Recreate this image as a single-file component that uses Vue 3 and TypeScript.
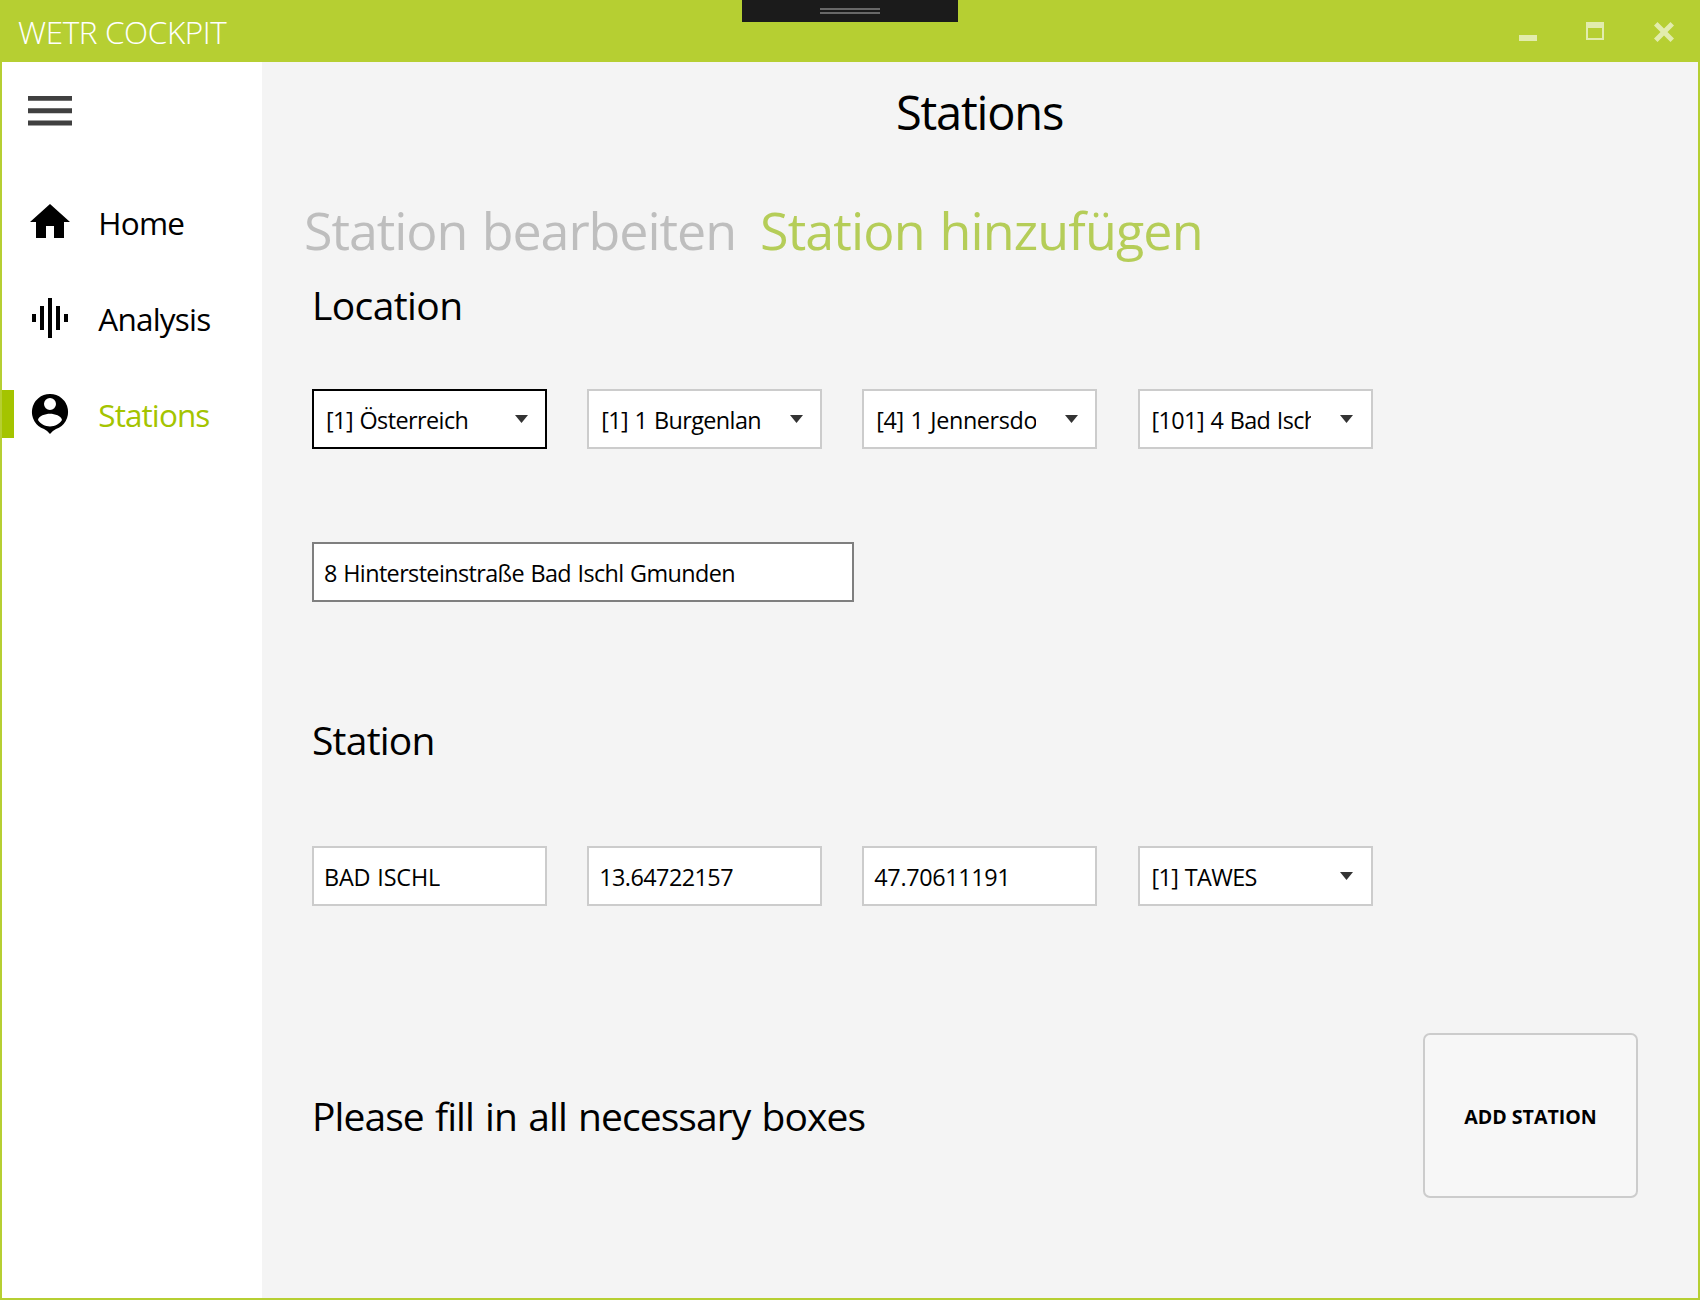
<script setup lang="ts">
interface NavItem {
  label: string
  path: string
  active?: boolean
  spacing: string
}
interface Field {
  value: string
  kind: 'select' | 'input'
  focused?: boolean
  spacing: string
}

const nav: NavItem[] = [
  { label: 'Home', path: 'M10,20V14H14V20H19V12H22L12,3L2,12H5V20H10Z', spacing: '-0.78px' },
  { label: 'Analysis', path: 'M3,10H5V14H3ZM7,6H9V18H7ZM11,2H13V22H11ZM15,6H17V18H15ZM19,10H21V14H19Z', spacing: '-0.8px' },
  {
    label: 'Stations',
    path: 'M12,2A9,9 0 0 0 9,19.5Q10.8,20.4 12,22Q13.2,20.4 15,19.5A9,9 0 0 0 12,2ZM12,4A3,3 0 0 1 12,10A3,3 0 0 1 12,4ZM6,15C6.3,12.9 9.6,11.85 12,11.85C14.4,11.85 17.7,12.9 18,15C16.7,17 14.5,18.2 12,18.2C9.5,18.2 7.3,17 6,15Z',
    active: true,
    spacing: '-0.92px',
  },
]

const locationFields: Field[] = [
  { value: '[1] Österreich', kind: 'select', focused: true, spacing: '-0.57px' },
  { value: '[1] 1 Burgenlan', kind: 'select', spacing: '-0.58px' },
  { value: '[4] 1 Jennersdo', kind: 'select', spacing: '-0.38px' },
  { value: '[101] 4 Bad Ischl', kind: 'select', spacing: '-0.6px' },
]
const stationFields: Field[] = [
  { value: 'BAD ISCHL', kind: 'input', spacing: '-0.16px' },
  { value: '13.64722157', kind: 'input', spacing: '-0.55px' },
  { value: '47.70611191', kind: 'input', spacing: '-0.35px' },
  { value: '[1] TAWES', kind: 'select', spacing: '-0.62px' },
]
const rows = { location: locationFields, station: stationFields }
</script>

<template>
  <div class="window">
    <header class="titlebar">
      <span class="app-title">WETR COCKPIT</span>
      <div class="controls">
        <span class="minimize"></span>
        <span class="maximize"></span>
        <svg class="close" width="20" height="20" viewBox="0 0 20 20">
          <path d="M3.5,0L10,6.5L16.5,0L20,3.5L13.5,10L20,16.5L16.5,20L10,13.5L3.5,20L0,16.5L6.5,10L0,3.5Z" />
        </svg>
      </div>
      <div class="grip"><i></i><i></i></div>
    </header>

    <div class="body">
      <aside class="sidebar">
        <svg class="burger" width="44" height="30" viewBox="0 0 44 30">
          <path d="M0,0H44V4.8H0ZM0,12.2H44V17.2H0ZM0,24.6H44V29.5H0Z" />
        </svg>
        <nav>
          <a v-for="item in nav" :key="item.label" class="nav-item" :class="{ active: item.active }">
            <span class="marker"></span>
            <svg width="48" height="48" viewBox="0 0 24 24"><path :d="item.path" fill-rule="evenodd" /></svg>
            <span class="nav-label" :style="{ letterSpacing: item.spacing }">{{ item.label }}</span>
          </a>
        </nav>
      </aside>

      <main>
        <h1>Stations</h1>
        <div class="tabs">
          <span class="tab">Station bearbeiten</span>
          <span class="tab selected">Station hinzufügen</span>
        </div>

        <h2>Location</h2>
        <div class="fields location-row">
          <div v-for="f in rows.location" :key="f.value" class="field" :class="[f.kind, { focused: f.focused }]">
            <span class="value" :style="{ letterSpacing: f.spacing }">{{ f.value }}</span>
            <svg class="caret" width="13" height="8" viewBox="0 0 13 8"><path d="M0,0H13L6.5,8Z" /></svg>
          </div>
        </div>
        <div class="field input address"><span class="value">8 Hintersteinstraße Bad Ischl Gmunden</span></div>

        <h2 class="station-heading">Station</h2>
        <div class="fields station-row">
          <div v-for="f in rows.station" :key="f.value" class="field" :class="f.kind">
            <span class="value" :style="{ letterSpacing: f.spacing }">{{ f.value }}</span>
            <svg v-if="f.kind === 'select'" class="caret" width="13" height="8" viewBox="0 0 13 8"><path d="M0,0H13L6.5,8Z" /></svg>
          </div>
        </div>

        <footer>
          <p>Please fill in all necessary boxes</p>
          <button type="button">ADD STATION</button>
        </footer>
      </main>
    </div>
  </div>
</template>

<style>
body {
  margin: 0;
}
</style>

<style scoped>
* {
  box-sizing: border-box;
}
.window {
  width: 1700px;
  height: 1300px;
  display: flex;
  flex-direction: column;
  border: 2px solid #b6cf32;
  border-top: 0;
  background: #f4f4f4;
  color: #000;
  font-family: 'Open Sans', 'Noto Sans', sans-serif;
  overflow: hidden;
}
.titlebar {
  position: relative;
  flex: none;
  height: 62px;
  padding: 2px 24px 0 16px;
  display: flex;
  justify-content: space-between;
  background: #b6cf32;
}
.app-title {
  color: #fff;
  font-size: 31.5px;
  font-weight: 300;
  line-height: 60px;
  letter-spacing: -0.4px;
}
.controls {
  display: flex;
  height: 60px;
  align-items: center;
  color: #e2ecad;
}
.minimize {
  width: 18px;
  height: 6px;
  margin: 12px 49px 0 0;
  background: currentColor;
}
.maximize {
  width: 18px;
  height: 18px;
  margin: -2px 50px 0 0;
  border: 2px solid currentColor;
  border-top-width: 6px;
}
.close {
  fill: currentColor;
}
.grip {
  position: absolute;
  left: 740px;
  top: 0;
  width: 216px;
  height: 22px;
  padding-top: 8px;
  display: flex;
  flex-direction: column;
  align-items: center;
  gap: 2px;
  background: #1b1b1b;
}
.grip i {
  width: 60px;
  height: 2px;
  background: #686868;
}
.body {
  flex: 1;
  display: flex;
  min-height: 0;
}
.sidebar {
  flex: none;
  width: 260px;
  padding-top: 34px;
  background: #fff;
}
.burger {
  display: block;
  margin-left: 26px;
  fill: #404040;
}
nav {
  display: flex;
  flex-direction: column;
  gap: 48px;
  margin-top: 72px;
}
.nav-item {
  display: flex;
  height: 48px;
}
.marker {
  width: 12px;
  margin-right: 12px;
}
.nav-label {
  margin-left: 24.3px;
  padding-top: 1px;
  font-size: 31.5px;
  line-height: 48px;
}
.active .marker {
  background: #a4c400;
}
.active .nav-label {
  color: #a4c400;
}
main {
  flex: 1;
  padding-left: 50px;
}
h1,
h2,
p {
  margin: 0;
  font-weight: 400;
}
h1 {
  margin: 20px 0 0 -51px;
  text-align: center;
  font-size: 47px;
  line-height: 60px;
  letter-spacing: -1.19px;
}
.tabs {
  display: flex;
  margin: 53px 0 0 -8px;
  font-size: 52px;
  line-height: 70px;
  word-spacing: 2px;
}
.tab {
  width: 456px;
  color: #bebebe;
  letter-spacing: -1.07px;
  white-space: nowrap;
}
.tab.selected {
  color: #b5cd58;
  letter-spacing: -0.86px;
}
h2 {
  margin-top: 15px;
  font-size: 39px;
  line-height: 50px;
  letter-spacing: -0.6px;
}
.station-heading {
  margin-top: 113px;
  letter-spacing: -0.77px;
}
.fields {
  display: grid;
  grid-template-columns: repeat(4, 235px);
  column-gap: 40.18px;
}
.location-row {
  margin-top: 59px;
}
.station-row {
  margin-top: 81px;
}
.field {
  display: flex;
  align-items: center;
  height: 60px;
  border: 2px solid #ccc;
  background: #fff;
  font-size: 23.4px;
  line-height: 54px;
  word-spacing: 1px;
}
.value {
  padding-top: 2px;
  overflow: hidden;
  white-space: nowrap;
}
.input {
  padding-left: 10px;
}
.select {
  padding-left: 12px;
}
.select .value {
  width: 159.5px;
}
.focused {
  border-color: #000;
}
.caret {
  margin-left: 29px;
  fill: #333;
}
.address {
  width: 542px;
  margin-top: 93px;
  border-color: #7f7f7f;
  letter-spacing: -0.61px;
}
footer {
  display: flex;
  justify-content: space-between;
  margin-top: 127px;
  padding-right: 60px;
}
footer p {
  margin-top: 58px;
  font-size: 39px;
  line-height: 50px;
  letter-spacing: -0.93px;
  word-spacing: 2px;
}
button {
  width: 215px;
  height: 165px;
  padding: 1px 0 0;
  border: 2px solid #ccc;
  border-radius: 7px;
  background: #f7f7f7;
  color: #000;
  font: 700 19.6px 'Open Sans', 'Noto Sans', sans-serif;
}
</style>
